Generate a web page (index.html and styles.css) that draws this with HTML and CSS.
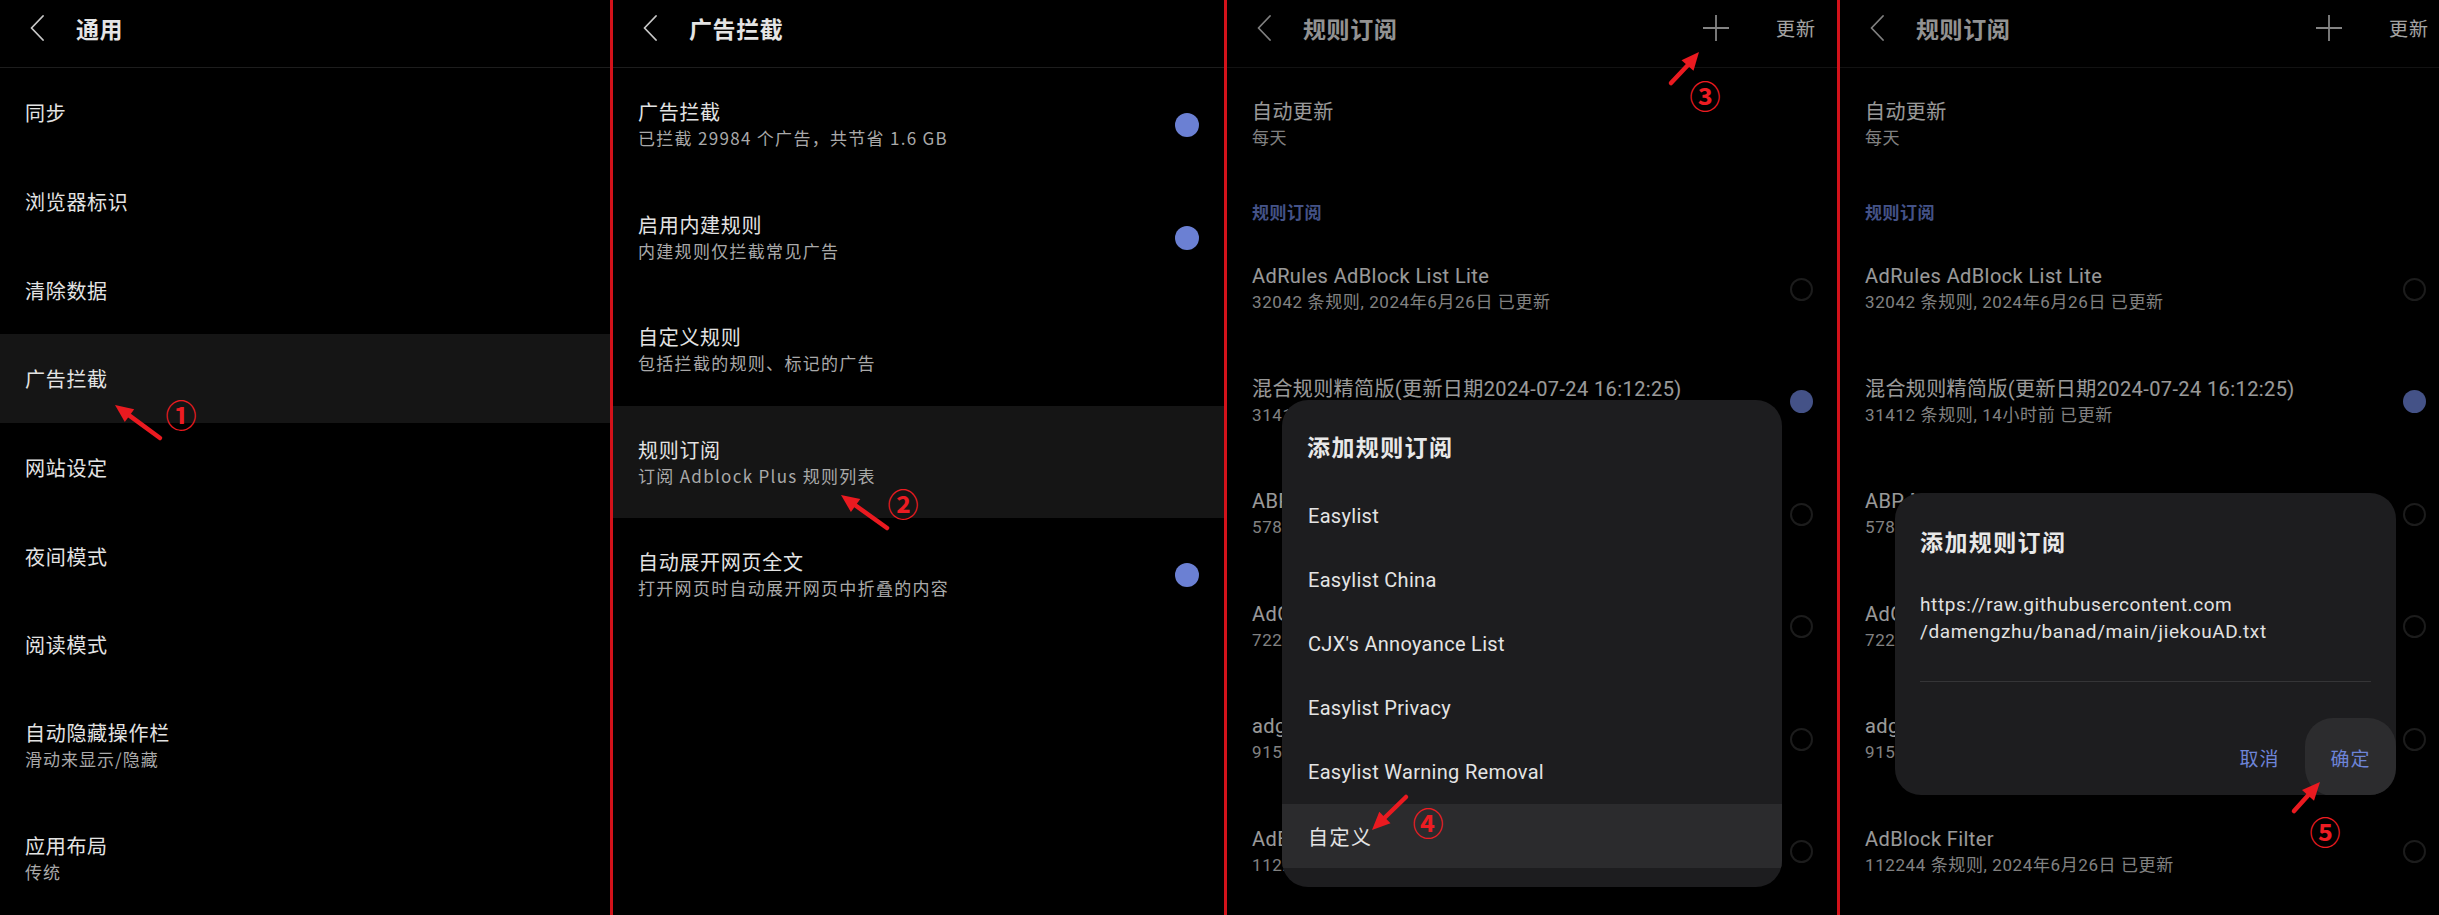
FILE: index.html
```html
<!DOCTYPE html>
<html lang="zh-CN">
<head>
<meta charset="utf-8">
<title>广告拦截设置</title>
<link rel="stylesheet" href="styles.css">
</head>
<body>
<div class="screen">

  <!-- Panel 1 -->
  <section class="panel p1">
    <header class="bar">
      <svg class="back" viewBox="0 0 14 26"><path d="M13 1 L1.5 13 L13 25"/></svg>
      <h1>通用</h1>
    </header>
    <ul class="list">
      <li class="row"><div class="txt"><div class="t">同步</div></div></li>
      <li class="row"><div class="txt"><div class="t">浏览器标识</div></div></li>
      <li class="row"><div class="txt"><div class="t">清除数据</div></div></li>
      <li class="row on"><div class="txt"><div class="t">广告拦截</div></div></li>
      <li class="row"><div class="txt"><div class="t">网站设定</div></div></li>
      <li class="row"><div class="txt"><div class="t">夜间模式</div></div></li>
      <li class="row"><div class="txt"><div class="t">阅读模式</div></div></li>
      <li class="row two"><div class="txt"><div class="t">自动隐藏操作栏</div><div class="s">滑动来显示/隐藏</div></div></li>
      <li class="row two"><div class="txt"><div class="t">应用布局</div><div class="s">传统</div></div></li>
    </ul>
    <svg class="anno" width="610" height="915">
      <line x1="160" y1="438" x2="129.5" y2="415.6"/>
      <polygon points="115,405 134.2,409.2 124.8,422"/>
    </svg>
    <span class="num" style="left:181px;top:413px">①</span>
  </section>
  <div class="sep"></div>

  <!-- Panel 2 -->
  <section class="panel p2">
    <header class="bar">
      <svg class="back" viewBox="0 0 14 26"><path d="M13 1 L1.5 13 L13 25"/></svg>
      <h1>广告拦截</h1>
    </header>
    <ul class="list">
      <li class="row two"><div class="txt"><div class="t">广告拦截</div><div class="s">已拦截 29984 个广告，共节省 1.6 GB</div></div><span class="knob"></span></li>
      <li class="row two"><div class="txt"><div class="t">启用内建规则</div><div class="s">内建规则仅拦截常见广告</div></div><span class="knob"></span></li>
      <li class="row two"><div class="txt"><div class="t">自定义规则</div><div class="s">包括拦截的规则、标记的广告</div></div></li>
      <li class="row two on"><div class="txt"><div class="t">规则订阅</div><div class="s">订阅 Adblock Plus 规则列表</div></div></li>
      <li class="row two"><div class="txt"><div class="t">自动展开网页全文</div><div class="s">打开网页时自动展开网页中折叠的内容</div></div><span class="knob"></span></li>
    </ul>
    <svg class="anno" width="611" height="915">
      <line x1="274" y1="528" x2="242.6" y2="505.5"/>
      <polygon points="228,495 247.3,499 237.9,512"/>
    </svg>
    <span class="num" style="left:290px;top:502px">②</span>
  </section>
  <div class="sep"></div>

  <!-- Panel 3 -->
  <section class="panel p3">
    <header class="bar">
      <svg class="back" viewBox="0 0 14 26"><path d="M13 1 L1.5 13 L13 25"/></svg>
      <h1>规则订阅</h1>
      <svg class="plus" viewBox="0 0 26 26"><path d="M13 0 V26 M0 13 H26"/></svg>
      <span class="act">更新</span>
    </header>
    <ul class="list subs">
      <li class="row two"><div class="txt"><div class="t">自动更新</div><div class="s">每天</div></div></li>
      <li class="section">规则订阅</li>
      <li class="row two"><div class="txt"><div class="t">AdRules AdBlock List Lite</div><div class="s">32042 条规则, 2024年6月26日 已更新</div></div><span class="radio"></span></li>
      <li class="row two"><div class="txt"><div class="t">混合规则精简版(更新日期2024-07-24 16:12:25)</div><div class="s">31412 条规则, 14小时前 已更新</div></div><span class="radio sel"></span></li>
      <li class="row two"><div class="txt"><div class="t">ABP Merge Rules</div><div class="s">57812 条规则, 2024年6月26日 已更新</div></div><span class="radio"></span></li>
      <li class="row two"><div class="txt"><div class="t">AdGuard Chinese Filter</div><div class="s">72206 条规则, 2024年6月26日 已更新</div></div><span class="radio"></span></li>
      <li class="row two"><div class="txt"><div class="t">adguard base filter</div><div class="s">91594 条规则, 2024年6月26日 已更新</div></div><span class="radio"></span></li>
      <li class="row two"><div class="txt"><div class="t">AdBlock Filter</div><div class="s">112244 条规则, 2024年6月26日 已更新</div></div><span class="radio"></span></li>
    </ul>
    <div class="scrim"></div>
    <div class="dialog d3">
      <div class="dtitle">添加规则订阅</div>
      <ul class="opts">
        <li class="opt">Easylist</li>
        <li class="opt">Easylist China</li>
        <li class="opt">CJX's Annoyance List</li>
        <li class="opt">Easylist Privacy</li>
        <li class="opt">Easylist Warning Removal</li>
        <li class="opt on">自定义</li>
      </ul>
    </div>
    <svg class="anno" width="610" height="915">
      <line x1="444" y1="83" x2="460.5" y2="65.5"/>
      <polygon points="472,52 466.5,70.8 454.5,60.2"/>
      <line x1="179" y1="797" x2="157.9" y2="817.5"/>
      <polygon points="145,830 163.5,823.2 152.3,811.8"/>
    </svg>
    <span class="num" style="left:478px;top:94px">③</span>
    <span class="num" style="left:201px;top:821px">④</span>
  </section>
  <div class="sep"></div>

  <!-- Panel 4 -->
  <section class="panel p4">
    <header class="bar">
      <svg class="back" viewBox="0 0 14 26"><path d="M13 1 L1.5 13 L13 25"/></svg>
      <h1>规则订阅</h1>
      <svg class="plus" viewBox="0 0 26 26"><path d="M13 0 V26 M0 13 H26"/></svg>
      <span class="act">更新</span>
    </header>
    <ul class="list subs">
      <li class="row two"><div class="txt"><div class="t">自动更新</div><div class="s">每天</div></div></li>
      <li class="section">规则订阅</li>
      <li class="row two"><div class="txt"><div class="t">AdRules AdBlock List Lite</div><div class="s">32042 条规则, 2024年6月26日 已更新</div></div><span class="radio"></span></li>
      <li class="row two"><div class="txt"><div class="t">混合规则精简版(更新日期2024-07-24 16:12:25)</div><div class="s">31412 条规则, 14小时前 已更新</div></div><span class="radio sel"></span></li>
      <li class="row two"><div class="txt"><div class="t">ABP Merge Rules</div><div class="s">57812 条规则, 2024年6月26日 已更新</div></div><span class="radio"></span></li>
      <li class="row two"><div class="txt"><div class="t">AdGuard Chinese Filter</div><div class="s">72206 条规则, 2024年6月26日 已更新</div></div><span class="radio"></span></li>
      <li class="row two"><div class="txt"><div class="t">adguard base filter</div><div class="s">91594 条规则, 2024年6月26日 已更新</div></div><span class="radio"></span></li>
      <li class="row two"><div class="txt"><div class="t">AdBlock Filter</div><div class="s">112244 条规则, 2024年6月26日 已更新</div></div><span class="radio"></span></li>
    </ul>
    <div class="scrim"></div>
    <div class="dialog d4">
      <div class="dtitle">添加规则订阅</div>
      <div class="field">https://raw.githubusercontent.com<br>/damengzhu/banad/main/jiekouAD.txt</div>
      <div class="btns">
        <span class="btn">取消</span>
        <span class="btn on">确定</span>
      </div>
    </div>
    <svg class="anno" width="610" height="915">
      <line x1="454" y1="811" x2="468" y2="795.4"/>
      <polygon points="480,782 474,800.7 462,790.1"/>
    </svg>
    <span class="num" style="left:485px;top:830px">⑤</span>
  </section>

</div>
</body>
</html>
```

FILE: styles.css
```css
html, body {
  margin: 0;
  padding: 0;
  background: #000;
}
body {
  width: 2439px;
  height: 915px;
  overflow: hidden;
  font-family: "Noto Sans CJK SC", "Noto Sans", sans-serif;
}
.screen {
  display: flex;
  width: 2439px;
  height: 915px;
  overflow: hidden;
}
.panel {
  position: relative;
  flex: 0 0 610px;
  height: 915px;
  overflow: hidden;
  background: #000;
}
.panel.p2 { flex-basis: 611px; }
.sep {
  flex: 0 0 3px;
  background: #d3121a;
}

/* header bar */
.bar {
  height: 68px;
  box-sizing: border-box;
  border-bottom: 1px solid #1d1d1d;
  display: flex;
  align-items: flex-start;
  padding: 15px 21px 0 30px;
}
.back {
  width: 14px;
  height: 26px;
  flex: none;
  margin-right: 32px;
}
.back path {
  fill: none;
  stroke: #c8c8c8;
  stroke-width: 1.8;
  stroke-linecap: round;
  stroke-linejoin: round;
}
.bar h1 {
  margin: 0;
  font-size: 23px;
  line-height: 26px;
  font-weight: 700;
  color: #e4e4e4;
  letter-spacing: 0.6px;
}
.plus {
  width: 26px;
  height: 26px;
  margin-left: auto;
  flex: none;
}
.plus path {
  stroke: #cfcfcf;
  stroke-width: 1.8;
  fill: none;
}
.act {
  margin-left: 47px;
  font-size: 19px;
  line-height: 26px;
  color: #ffffff;
  letter-spacing: 1px;
}

/* lists */
.list {
  list-style: none;
  margin: 0;
  padding: 0;
}
.row {
  height: 88.7px;
  box-sizing: border-box;
  display: flex;
  align-items: center;
  padding: 2px 24px 0 25px;
}
.row.two { height: 112.5px; }
.row.on { background: #151515; }
.txt {
  flex: 1;
  min-width: 0;
}
.t {
  font-size: 20px;
  line-height: 26px;
  color: #e3e3e3;
  letter-spacing: 0.7px;
  white-space: nowrap;
}
.s {
  font-size: 17px;
  line-height: 26px;
  color: #a9a9a9;
  letter-spacing: 1px;
  white-space: nowrap;
}
.p2 .s { letter-spacing: 1.3px; }
.p2 .row { padding-right: 25px; }

.knob {
  width: 24px;
  height: 24px;
  border-radius: 50%;
  background: #6b80d3;
  flex: none;
}

/* subscription list (panels 3, 4) */
.subs .t {
  font-family: Roboto, "Noto Sans CJK SC", sans-serif;
  color: #f0f0f0;
  letter-spacing: 0.4px;
}
.subs .s {
  font-family: Roboto, "Noto Sans CJK SC", sans-serif;
  color: #cacaca;
  letter-spacing: 0.6px;
}
.section {
  padding: 20px 25px 0 25px;
  height: 51.5px;
  box-sizing: border-box;
  font-size: 17px;
  line-height: 22px;
  font-weight: 700;
  color: #6b80d3;
  letter-spacing: 0.5px;
}
.radio {
  width: 23px;
  height: 23px;
  box-sizing: border-box;
  border-radius: 50%;
  border: 2px solid #2c2c2c;
  flex: none;
}
.radio.sel {
  border: none;
  background: #6b80d3;
}

.scrim {
  position: absolute;
  inset: 0;
  background: rgba(0, 0, 0, 0.36);
}

/* dialogs */
.dialog {
  position: absolute;
  left: 55px;
  width: 500px;
  background: #1d1d1f;
  border-radius: 26px;
  overflow: hidden;
}
.d3 { top: 400px; height: 487px; }
.d4 { top: 493px; height: 302px; width: 501px; }
.dtitle {
  font-size: 23px;
  line-height: 22px;
  font-weight: 700;
  color: #e8e8e8;
  letter-spacing: 1.4px;
  padding: 35px 25px 27px;
}
.d4 .dtitle { padding: 37px 25px 0; }
.opts {
  list-style: none;
  margin: 0;
  padding: 0;
}
.opt {
  height: 64px;
  display: flex;
  align-items: center;
  padding-left: 26px;
  font-family: Roboto, "Noto Sans CJK SC", sans-serif;
  font-size: 20px;
  color: #e4e4e4;
  letter-spacing: 0.3px;
}
.opt.on {
  background: #2b2b2d;
  font-family: "Noto Sans CJK SC", sans-serif;
  letter-spacing: 1.5px;
}
.field {
  margin: 40px 25px 0;
  padding-bottom: 36px;
  border-bottom: 1px solid #353537;
  font-family: Roboto, "Noto Sans CJK SC", sans-serif;
  font-size: 19px;
  line-height: 26.5px;
  color: #e2e2e2;
  letter-spacing: 0.6px;
}
.btns {
  margin-top: 36px;
  height: 78px;
  display: flex;
  justify-content: flex-end;
}
.btn {
  width: 91px;
  height: 78px;
  display: flex;
  align-items: center;
  justify-content: center;
  font-size: 19px;
  color: #6d84d8;
  letter-spacing: 1px;
  border-radius: 28px;
}
.btn.on { background: #2c2c2e; }

/* annotations */
.anno {
  position: absolute;
  left: 0;
  top: 0;
  pointer-events: none;
  z-index: 5;
}
.anno line {
  stroke: #ea1a20;
  stroke-width: 4.5;
  stroke-linecap: round;
}
.anno polygon {
  fill: #ea1a20;
}
.num {
  position: absolute;
  z-index: 6;
  transform: translate(-50%, -50%);
  font-family: "Noto Sans CJK SC", sans-serif;
  font-size: 31px;
  font-weight: 700;
  line-height: 1;
  color: #ec1c22;
}
```
